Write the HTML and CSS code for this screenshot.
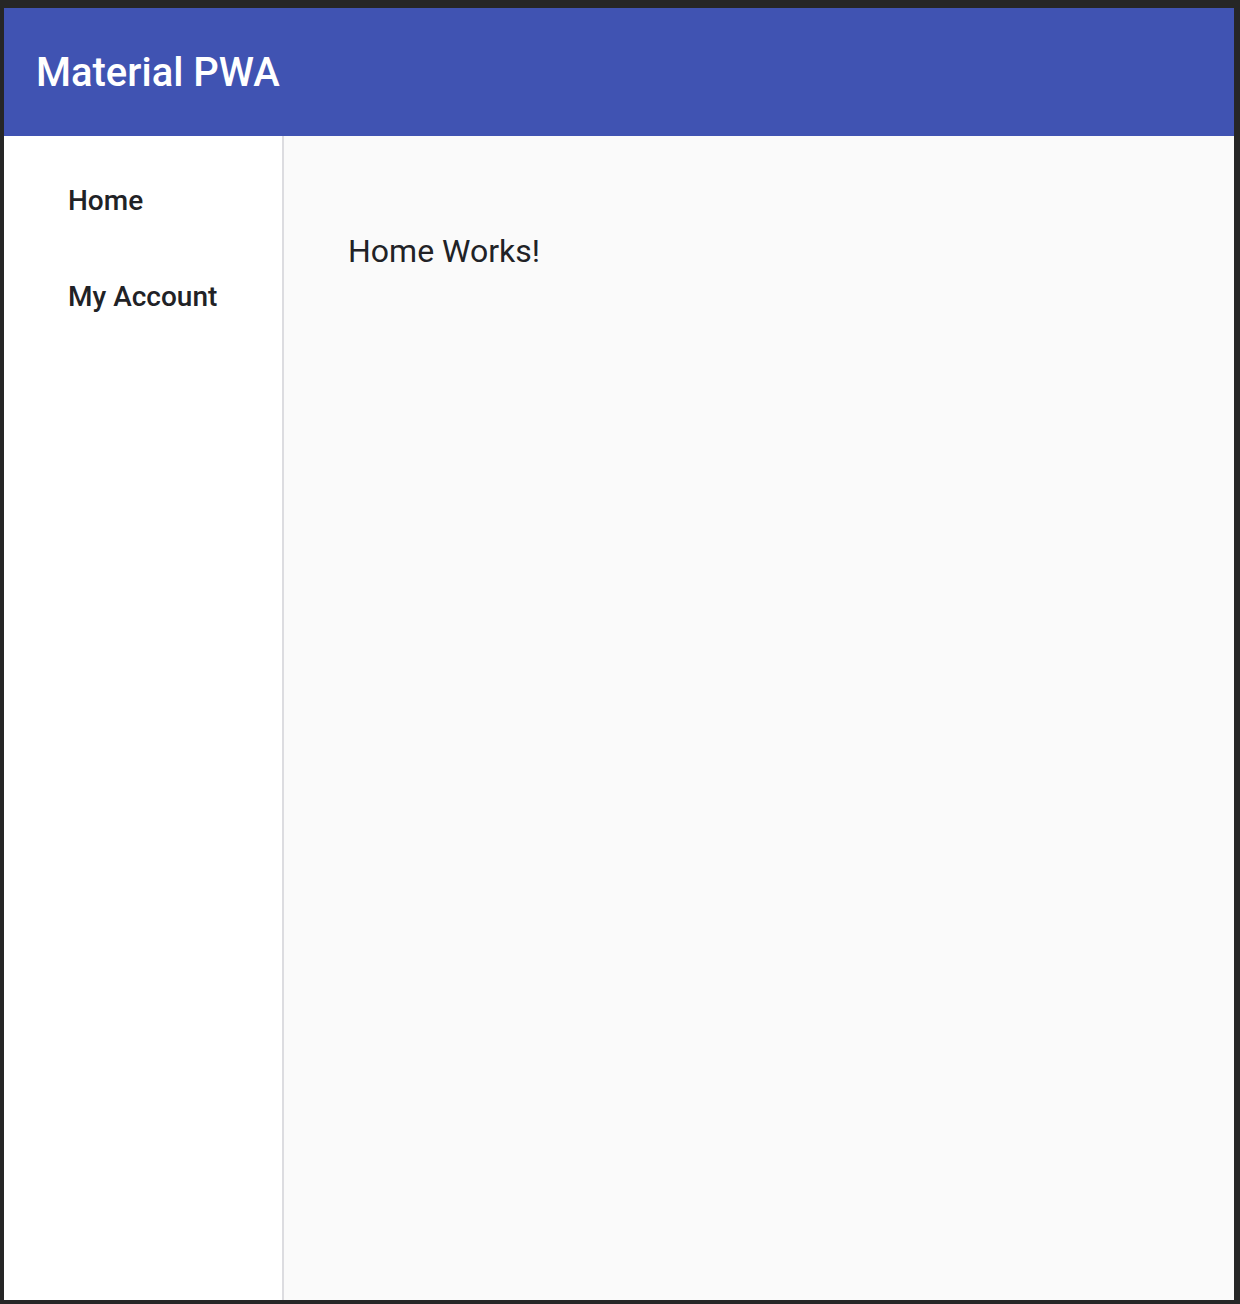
FILE: index.html
```html
<!DOCTYPE html>
<html>
<head>
<meta charset="utf-8">
<link rel="stylesheet" href="styles.css">
</head>
<body>
<div class="frame">
  <div class="app">
    <header class="toolbar"><span class="title">Material PWA</span></header>
    <div class="body">
      <nav class="sidenav">
        <a class="nav-item">Home</a>
        <a class="nav-item">My Account</a>
      </nav>
      <main class="content">
        <p class="page-text">Home Works!</p>
      </main>
    </div>
  </div>
</div>
</body>
</html>
```
FILE: styles.css
```css
html, body { margin: 0; padding: 0; height: 100%; }
body { background: #262626; font-family: Roboto, "Noto Sans", sans-serif; }
.frame { height: 1304px; box-sizing: border-box; padding: 8px 6px 4px 4px; display: flex; }
.app { flex: 1; display: flex; flex-direction: column; background: #fafafa; }
.toolbar { height: 128px; background: #4053b2; display: flex; align-items: center; padding: 0 32px; box-sizing: border-box; flex-shrink: 0; }
.title { color: #fff; font-size: 40px; font-weight: 500; }
.body { flex: 1; display: flex; }
.sidenav { width: 278px; background: #fff; border-right: 2px solid #dcdce0; display: flex; flex-direction: column; padding-top: 29px; box-sizing: content-box; }
.nav-item { display: block; height: 96px; line-height: 72px; padding-left: 64px; font-size: 28px; font-weight: 500; color: #212226; }
.content { flex: 1; padding: 64px; }
.page-text { margin: 32px 0 0 0; font-size: 32px; color: #212226; }
```
